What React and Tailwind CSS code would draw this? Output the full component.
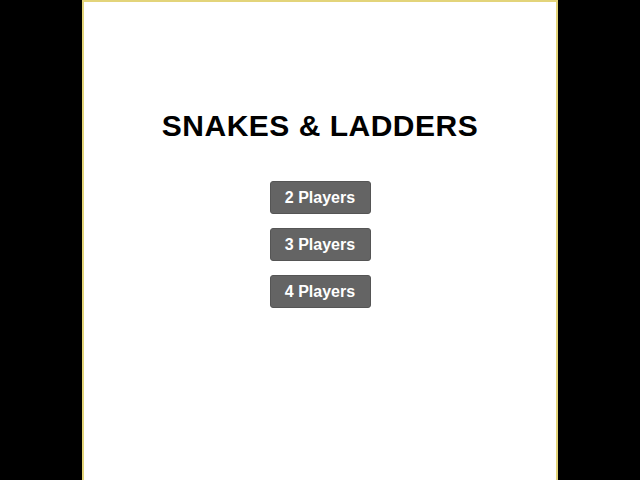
// Game start screen: title plus player-count picker
const PLAYER_COUNTS = [2, 3, 4];

export default function App() {
  return (
    <div className="w-[640px] h-[480px] bg-black flex justify-center" style={{ fontFamily: '"Liberation Sans", Arial, sans-serif' }}>
      <div className="w-[476px] h-[482px] bg-white border-2 border-[#e3d47a] flex flex-col items-center">
        <h1 className="mt-[107px] text-[30px] leading-[34px] font-bold tracking-[0.5px] text-black">
          SNAKES &amp; LADDERS
        </h1>

        <div className="mt-[38px] flex flex-col gap-[14px]">
          {PLAYER_COUNTS.map(n => (
            <button
              key={n}
              className="w-[101px] h-[33px] bg-[#646464] border border-[#555] rounded-[3px] text-white text-[16px] font-bold"
            >
              {n} Players
            </button>
          ))}
        </div>
      </div>
    </div>
  );
}
